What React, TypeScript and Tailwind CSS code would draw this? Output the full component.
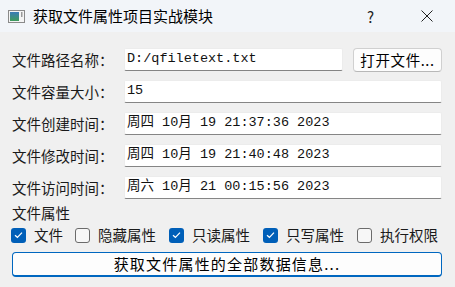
import React from "react";

const cjk = { fontFamily: '"Noto Sans CJK SC", "Noto Sans", sans-serif' };
const mono = { fontFamily: '"Liberation Mono", "Noto Sans CJK SC", monospace' };

function Field({ value, narrow }: { value: string; narrow?: boolean }) {
  return (
    <div
      className={`${narrow ? "w-[219px]" : "flex-1"} h-[23px] bg-white border border-[#ececec] border-b-[#858585] rounded-[2px] flex items-center pl-[2px] text-[13.5px] text-[#111]`}
      style={mono}
    >
      {value}
    </div>
  );
}

function Row({ label, children }: { label: string; children: React.ReactNode }) {
  return (
    <div className="flex items-center h-[23px]">
      <div className="w-[112px] text-[14.5px] text-[#1a1a1a]" style={cjk}>
        {label}
      </div>
      {children}
    </div>
  );
}

function Check({ checked, label, w }: { checked: boolean; label: string; w: string }) {
  return (
    <div className={`flex items-center ${w}`}>
      {checked ? (
        <div className="w-[15px] h-[15px] rounded-[3px] bg-[#005fb8] flex items-center justify-center">
          <svg width="9" height="8" viewBox="0 0 9 8">
            <path d="M1 4.2 L3.4 6.3 L8 1.6" stroke="#fff" strokeWidth="1.2" fill="none" />
          </svg>
        </div>
      ) : (
        <div className="w-[15px] h-[15px] rounded-[3px] border border-[#6b6b6b] bg-[#f7f7f7]" />
      )}
      <span className="ml-[8px] text-[14.5px] text-[#1a1a1a]" style={cjk}>
        {label}
      </span>
    </div>
  );
}

export default function App() {
  return (
    <div className="w-[455px] h-[287px] bg-[#f0f0f0] flex flex-col overflow-hidden">
      {/* title bar */}
      <div className="h-[32px] bg-[#f2f5f9] flex items-center relative">
        <svg className="ml-[8px]" width="17" height="13" viewBox="0 0 17 13">
          <rect x="0.5" y="0.5" width="16" height="12" fill="#f4f4f4" stroke="#8a8a8a" />
          <defs>
            <linearGradient id="g" x1="0" y1="0" x2="0" y2="1">
              <stop offset="0" stopColor="#3a7bb8" />
              <stop offset="1" stopColor="#3f9b5a" />
            </linearGradient>
          </defs>
          <rect x="2" y="2" width="9" height="9" fill="url(#g)" />
          <rect x="13" y="2" width="1.5" height="5" fill="#9a9a9a" />
        </svg>
        <span className="ml-[8px] text-[15px] text-black" style={cjk}>
          获取文件属性项目实战模块
        </span>
        <span className="absolute left-[367px] top-[6px] text-[15px] text-[#222]" style={cjk}>
          ?
        </span>
        <svg className="absolute left-[421px] top-[10px]" width="12" height="12" viewBox="0 0 12 12">
          <path d="M0.5 0.5 L11.5 11.5 M11.5 0.5 L0.5 11.5" stroke="#222" strokeWidth="1" />
        </svg>
      </div>

      {/* body */}
      <div className="flex flex-col px-[12px] pt-[16px]">
        <div className="flex flex-col gap-[9px] pr-[1px]">
          <Row label="文件路径名称：">
            <Field value="D:/qfiletext.txt" narrow />
            <button
              className="ml-[10px] w-[89px] h-[24px] bg-[#fdfdfd] border border-[#d0d0d0] border-b-[#b8b8b8] rounded-[4px] text-[14.5px] tracking-[0.6px] text-black flex items-center justify-center"
              style={cjk}
            >
              打开文件...
            </button>
          </Row>
          <Row label="文件容量大小：">
            <Field value="15" />
          </Row>
          <Row label="文件创建时间：">
            <Field value="周四 10月 19 21:37:36 2023" />
          </Row>
          <Row label="文件修改时间：">
            <Field value="周四 10月 19 21:40:48 2023" />
          </Row>
          <Row label="文件访问时间：">
            <Field value="周六 10月 21 00:15:56 2023" />
          </Row>
        </div>

        <div className="mt-[5px] h-[18px] text-[14.5px] text-[#1a1a1a] leading-[18px]" style={cjk}>
          文件属性
        </div>

        <div className="flex items-center h-[22px] mt-[2px] -ml-[1px]">
          <Check checked label="文件" w="w-[64px]" />
          <Check checked={false} label="隐藏属性" w="w-[94px]" />
          <Check checked label="只读属性" w="w-[94px]" />
          <Check checked label="只写属性" w="w-[94px]" />
          <Check checked={false} label="执行权限" w="w-[84px]" />
        </div>

        <button
          className="mt-[6px] w-[430px] h-[25px] bg-[#fdfdfd] border border-[#0067c0] border-b-2 rounded-[4px] text-[15px] tracking-[1.2px] text-black flex items-center justify-center"
          style={cjk}
        >
          获取文件属性的全部数据信息...
        </button>
      </div>
    </div>
  );
}
